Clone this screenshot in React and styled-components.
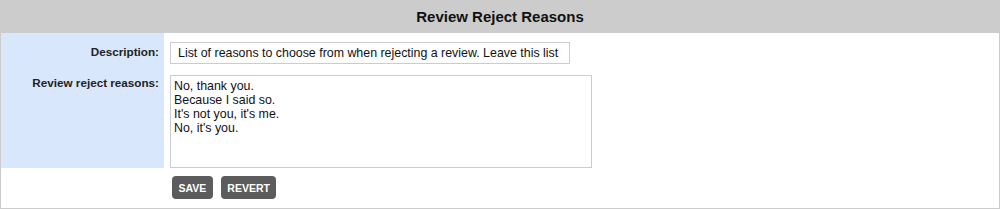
import styled, { createGlobalStyle } from 'styled-components';

const GlobalStyle = createGlobalStyle`
  body {
    margin: 0;
    background: #ffffff;
    font-family: "Liberation Sans", Arial, sans-serif;
  }
`;

// 전체 패널
const Panel = styled.div`
  width: 1000px;
  box-sizing: border-box;
  border: 1px solid #cccccc;
  border-top: none;
  background: #ffffff;
`;

// 패널 제목
const Header = styled.div`
  height: 33px;
  background: #cccccc;
  display: flex;
  align-items: center;
  justify-content: center;
  font-size: 15px;
  font-weight: bold;
  color: #111111;
`;

// 한 줄 (라벨 + 값)
const FieldRow = styled.div`
  display: flex;
`;

const Label = styled.div`
  width: 163px;
  flex-shrink: 0;
  box-sizing: border-box;
  background: #d9e7fc;
  text-align: right;
  padding: ${p => p.$top}px 5px 0 0;
  font-size: 11.7px;
  font-weight: bold;
  color: #222222;
`;

const Value = styled.div`
  padding: ${p => p.$top}px 0 0 6px;
  display: flex;
  gap: 8px;
`;

const TextInput = styled.input`
  width: 400px;
  height: 22px;
  box-sizing: border-box;
  border: 1px solid #cccccc;
  padding: 0 7px;
  font-family: "Liberation Sans", Arial, sans-serif;
  font-size: 12.4px;
  color: #111111;
  outline: none;
`;

const TextArea = styled.textarea`
  width: 422px;
  height: 93px;
  box-sizing: border-box;
  border: 1px solid #cccccc;
  padding: 3px 3px;
  font-family: "Liberation Sans", Arial, sans-serif;
  font-size: 12.4px;
  line-height: 14px;
  color: #111111;
  resize: none;
  outline: none;
  display: block;
`;

const ButtonRow = styled.div`
  padding: 8px 0 9px 171px;
  display: flex;
  gap: 8px;
`;

const Button = styled.button`
  height: 23px;
  padding: 0 6.5px;
  border: none;
  border-radius: 4px;
  background: #5c5c5c;
  color: #ffffff;
  font-family: "Liberation Sans", Arial, sans-serif;
  font-size: 10.5px;
  font-weight: bold;
  cursor: pointer;
`;

const reasons = `No, thank you.
Because I said so.
It's not you, it's me.
No, it's you.`;

function App() {
  return (
    <>
      <GlobalStyle />
      <Panel>
        <Header>Review Reject Reasons</Header>
        <FieldRow>
          <Label $top={12}>Description:</Label>
          <Value $top={9}>
            <TextInput
              type="text"
              defaultValue="List of reasons to choose from when rejecting a review. Leave this list blank to allow free form"
            />
          </Value>
        </FieldRow>
        <FieldRow>
          <Label $top={12}>Review reject reasons:</Label>
          <Value $top={11}>
            <TextArea defaultValue={reasons} />
          </Value>
        </FieldRow>
        <ButtonRow>
          <Button>SAVE</Button>
          <Button>REVERT</Button>
        </ButtonRow>
      </Panel>
    </>
  );
}

export default App;
